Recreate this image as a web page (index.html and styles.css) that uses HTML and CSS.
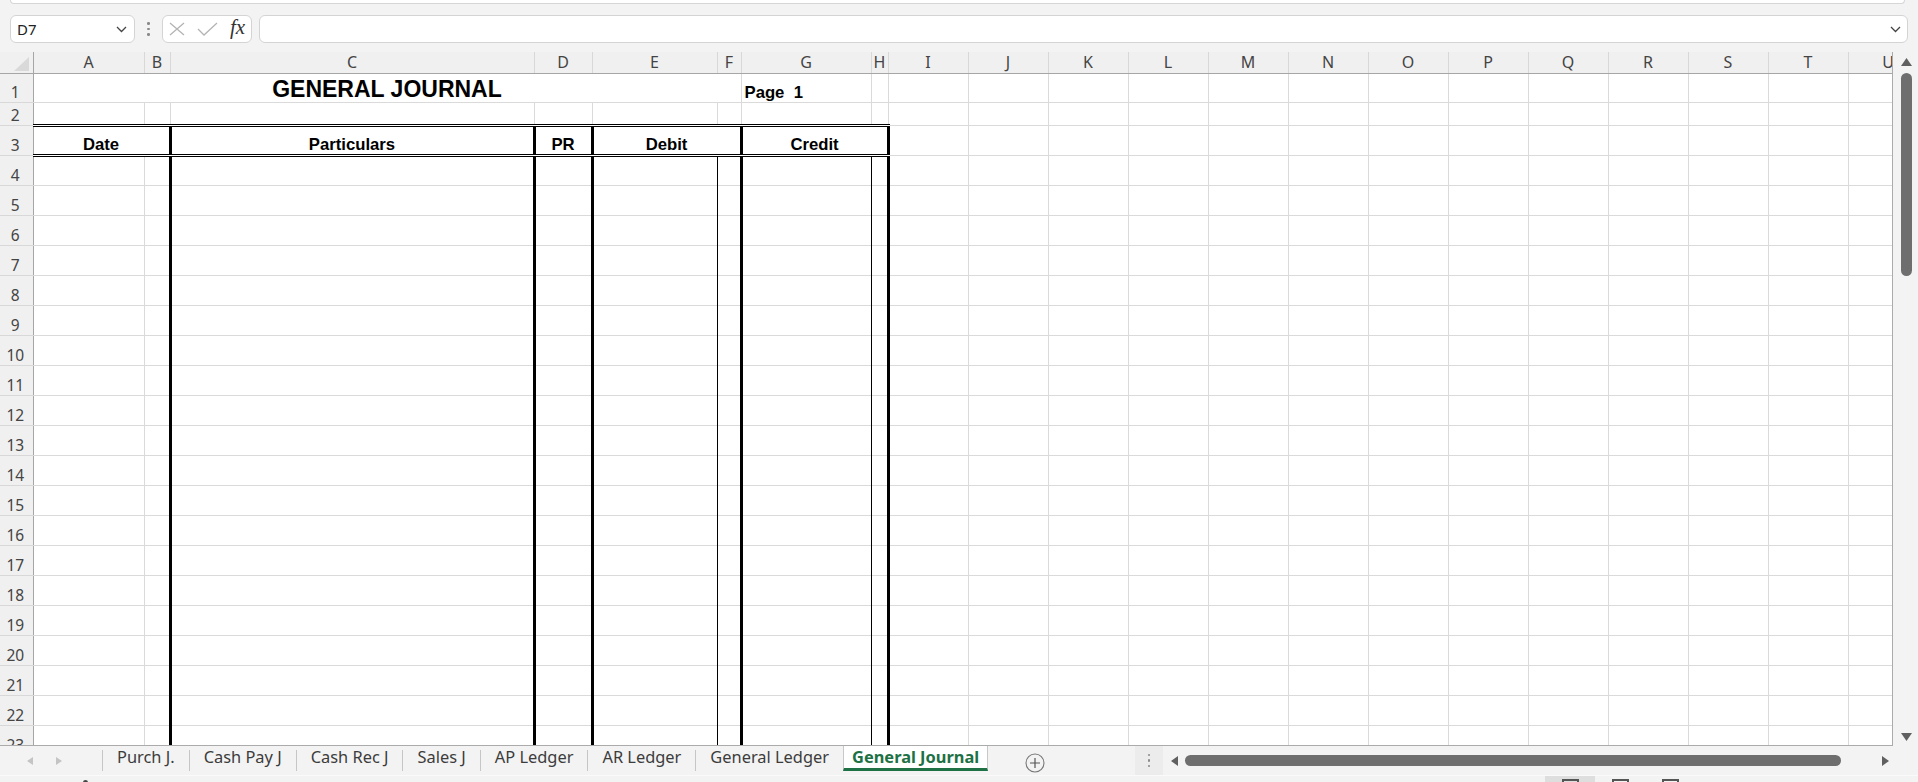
FILE: index.html
```html
<!DOCTYPE html>
<html lang="en">
<head>
    <meta charset="UTF-8">
    <meta name="viewport" content="width=device-width, initial-scale=1.0">
    <title>General Journal - Excel</title>
    <link rel="stylesheet" href="styles.css">
</head>
<body>
    <div class="ribbon-edge"></div>

    <div class="formula-bar">
        <div class="name-box">
            <span>D7</span>
            <svg width="11" height="7" viewBox="0 0 11 7"><polyline points="1,1 5.5,5.5 10,1" fill="none" stroke="#444" stroke-width="1.3"/></svg>
        </div>
        <div class="grip"><i></i><i></i><i></i></div>
        <div class="fx-box">
            <svg width="16" height="14" viewBox="0 0 16 14"><path d="M1 1 L15 13 M15 1 L1 13" stroke="#b4b4b4" stroke-width="1.3" fill="none"/></svg>
            <svg width="21" height="14" viewBox="0 0 21 14"><polyline points="1,7 7,13 20,1" fill="none" stroke="#b4b4b4" stroke-width="1.3"/></svg>
            <span class="fx">fx</span>
        </div>
        <div class="formula-input">
            <svg width="11" height="7" viewBox="0 0 11 7"><polyline points="1,1 5.5,5.5 10,1" fill="none" stroke="#444" stroke-width="1.3"/></svg>
        </div>
    </div>

    <div class="sheet-area">
        <div class="grid-wrap">
            <table class="sheet">
                <colgroup>
                    <col class="w-hd"><col class="w-a"><col class="w-b"><col class="w-c"><col class="w-d"><col class="w-e"><col class="w-f"><col class="w-g"><col class="w-h">
                    <col class="w-std"><col class="w-std"><col class="w-std"><col class="w-std"><col class="w-std"><col class="w-std"><col class="w-std"><col class="w-std"><col class="w-std"><col class="w-std"><col class="w-std"><col class="w-std"><col class="w-std">
                </colgroup>
                <thead>
                    <tr class="col-head">
                        <th class="corner"><svg width="15" height="14" viewBox="0 0 15 14"><polygon points="0,14 15,14 15,0" fill="#d9d9d9"/></svg></th>
                        <th>A</th><th>B</th><th>C</th><th>D</th><th>E</th><th>F</th><th>G</th><th>H</th>
                        <th>I</th><th>J</th><th>K</th><th>L</th><th>M</th><th>N</th><th>O</th><th>P</th><th>Q</th><th>R</th><th>S</th><th>T</th><th>U</th>
                    </tr>
                </thead>
                <tbody>
                    <tr class="r1">
                        <th>1</th>
                        <td colspan="6" class="title">GENERAL JOURNAL</td><td class="page">Page&nbsp;&nbsp;1</td><td></td>
                        <td></td><td></td><td></td><td></td><td></td><td></td><td></td><td></td><td></td><td></td><td></td><td></td><td></td>
                    </tr>
                    <tr class="r2">
                        <th>2</th>
                        <td></td><td></td><td></td><td></td><td></td><td></td><td></td><td></td>
                        <td></td><td></td><td></td><td></td><td></td><td></td><td></td><td></td><td></td><td></td><td></td><td></td><td></td>
                    </tr>
                    <tr class="r3">
                        <th>3</th>
                        <td colspan="2" class="jh">Date</td><td class="jh jl">Particulars</td><td class="jh jl">PR</td><td colspan="2" class="jh jl">Debit</td><td colspan="2" class="jh jl jr">Credit</td>
                        <td></td><td></td><td></td><td></td><td></td><td></td><td></td><td></td><td></td><td></td><td></td><td></td><td></td>
                    </tr>
                    <tr class="line"><th>4</th><td></td><td></td><td></td><td></td><td></td><td></td><td></td><td></td><td></td><td></td><td></td><td></td><td></td><td></td><td></td><td></td><td></td><td></td><td></td><td></td><td></td></tr>
                    <tr class="line"><th>5</th><td></td><td></td><td></td><td></td><td></td><td></td><td></td><td></td><td></td><td></td><td></td><td></td><td></td><td></td><td></td><td></td><td></td><td></td><td></td><td></td><td></td></tr>
                    <tr class="line"><th>6</th><td></td><td></td><td></td><td></td><td></td><td></td><td></td><td></td><td></td><td></td><td></td><td></td><td></td><td></td><td></td><td></td><td></td><td></td><td></td><td></td><td></td></tr>
                    <tr class="line"><th>7</th><td></td><td></td><td></td><td></td><td></td><td></td><td></td><td></td><td></td><td></td><td></td><td></td><td></td><td></td><td></td><td></td><td></td><td></td><td></td><td></td><td></td></tr>
                    <tr class="line"><th>8</th><td></td><td></td><td></td><td></td><td></td><td></td><td></td><td></td><td></td><td></td><td></td><td></td><td></td><td></td><td></td><td></td><td></td><td></td><td></td><td></td><td></td></tr>
                    <tr class="line"><th>9</th><td></td><td></td><td></td><td></td><td></td><td></td><td></td><td></td><td></td><td></td><td></td><td></td><td></td><td></td><td></td><td></td><td></td><td></td><td></td><td></td><td></td></tr>
                    <tr class="line"><th>10</th><td></td><td></td><td></td><td></td><td></td><td></td><td></td><td></td><td></td><td></td><td></td><td></td><td></td><td></td><td></td><td></td><td></td><td></td><td></td><td></td><td></td></tr>
                    <tr class="line"><th>11</th><td></td><td></td><td></td><td></td><td></td><td></td><td></td><td></td><td></td><td></td><td></td><td></td><td></td><td></td><td></td><td></td><td></td><td></td><td></td><td></td><td></td></tr>
                    <tr class="line"><th>12</th><td></td><td></td><td></td><td></td><td></td><td></td><td></td><td></td><td></td><td></td><td></td><td></td><td></td><td></td><td></td><td></td><td></td><td></td><td></td><td></td><td></td></tr>
                    <tr class="line"><th>13</th><td></td><td></td><td></td><td></td><td></td><td></td><td></td><td></td><td></td><td></td><td></td><td></td><td></td><td></td><td></td><td></td><td></td><td></td><td></td><td></td><td></td></tr>
                    <tr class="line"><th>14</th><td></td><td></td><td></td><td></td><td></td><td></td><td></td><td></td><td></td><td></td><td></td><td></td><td></td><td></td><td></td><td></td><td></td><td></td><td></td><td></td><td></td></tr>
                    <tr class="line"><th>15</th><td></td><td></td><td></td><td></td><td></td><td></td><td></td><td></td><td></td><td></td><td></td><td></td><td></td><td></td><td></td><td></td><td></td><td></td><td></td><td></td><td></td></tr>
                    <tr class="line"><th>16</th><td></td><td></td><td></td><td></td><td></td><td></td><td></td><td></td><td></td><td></td><td></td><td></td><td></td><td></td><td></td><td></td><td></td><td></td><td></td><td></td><td></td></tr>
                    <tr class="line"><th>17</th><td></td><td></td><td></td><td></td><td></td><td></td><td></td><td></td><td></td><td></td><td></td><td></td><td></td><td></td><td></td><td></td><td></td><td></td><td></td><td></td><td></td></tr>
                    <tr class="line"><th>18</th><td></td><td></td><td></td><td></td><td></td><td></td><td></td><td></td><td></td><td></td><td></td><td></td><td></td><td></td><td></td><td></td><td></td><td></td><td></td><td></td><td></td></tr>
                    <tr class="line"><th>19</th><td></td><td></td><td></td><td></td><td></td><td></td><td></td><td></td><td></td><td></td><td></td><td></td><td></td><td></td><td></td><td></td><td></td><td></td><td></td><td></td><td></td></tr>
                    <tr class="line"><th>20</th><td></td><td></td><td></td><td></td><td></td><td></td><td></td><td></td><td></td><td></td><td></td><td></td><td></td><td></td><td></td><td></td><td></td><td></td><td></td><td></td><td></td></tr>
                    <tr class="line"><th>21</th><td></td><td></td><td></td><td></td><td></td><td></td><td></td><td></td><td></td><td></td><td></td><td></td><td></td><td></td><td></td><td></td><td></td><td></td><td></td><td></td><td></td></tr>
                    <tr class="line"><th>22</th><td></td><td></td><td></td><td></td><td></td><td></td><td></td><td></td><td></td><td></td><td></td><td></td><td></td><td></td><td></td><td></td><td></td><td></td><td></td><td></td><td></td></tr>
                    <tr class="line"><th>23</th><td></td><td></td><td></td><td></td><td></td><td></td><td></td><td></td><td></td><td></td><td></td><td></td><td></td><td></td><td></td><td></td><td></td><td></td><td></td><td></td><td></td></tr>
                </tbody>
            </table>
        </div>
        <div class="vscroll">
            <svg width="11" height="8" viewBox="0 0 11 8"><polygon points="0,8 11,8 5.5,0" fill="#606060"/></svg>
            <div class="vthumb"></div>
            <svg class="down" width="11" height="8" viewBox="0 0 11 8"><polygon points="0,0 11,0 5.5,8" fill="#606060"/></svg>
        </div>
    </div>

    <div class="tab-bar">
        <div class="tab-nav">
            <svg width="6" height="8" viewBox="0 0 6 8"><polygon points="6,0 6,8 0,4" fill="#c4c4c4"/></svg>
            <svg width="6" height="8" viewBox="0 0 6 8"><polygon points="0,0 0,8 6,4" fill="#c4c4c4"/></svg>
        </div>
        <div class="tab">Purch J.</div>
        <div class="tab">Cash Pay J</div>
        <div class="tab">Cash Rec J</div>
        <div class="tab">Sales J</div>
        <div class="tab">AP Ledger</div>
        <div class="tab">AR Ledger</div>
        <div class="tab">General Ledger</div>
        <div class="tab active">General Journal</div>
        <div class="add-sheet">
            <svg width="20" height="20" viewBox="0 0 20 20"><circle cx="10" cy="10" r="9" fill="none" stroke="#777" stroke-width="1.1"/><path d="M10 5 V15 M5 10 H15" stroke="#555" stroke-width="1.2"/></svg>
        </div>
        <div class="hscroll">
            <div class="hgrip"><i></i><i></i><i></i></div>
            <svg width="7" height="10" viewBox="0 0 7 10"><polygon points="7,0 7,10 0,5" fill="#606060"/></svg>
            <div class="hthumb"></div>
            <svg class="right" width="7" height="10" viewBox="0 0 7 10"><polygon points="0,0 0,10 7,5" fill="#606060"/></svg>
        </div>
    </div>

    <div class="status-bar">
        <i class="status-dot"></i>
        <div class="views">
            <div class="view on"><i></i></div>
            <div class="view"><i></i></div>
            <div class="view"><i></i></div>
        </div>
    </div>
</body>
</html>
```

FILE: styles.css
```css
* {
    margin: 0;
    padding: 0;
    box-sizing: border-box;
}

body {
    width: 1918px;
    height: 782px;
    overflow: hidden;
    background: #f3f3f3;
    font-family: 'Noto Sans', sans-serif;
    color: #333;
}

/* ribbon / formula bar */

.ribbon-edge {
    height: 4px;
    margin: 0 13px 0 10px;
    background: #fff;
    border: 1px solid #d6d6d6;
    border-top: none;
    border-radius: 0 0 7px 7px;
}

.formula-bar {
    display: flex;
    align-items: center;
    height: 48px;
    padding: 11px 10px 9px 10px;
}

.name-box, .fx-box, .formula-input {
    height: 28px;
    background: #fff;
    border: 1px solid #d4d4d4;
    border-radius: 6px;
    display: flex;
    align-items: center;
}

.name-box {
    width: 125px;
    padding: 0 7px 0 6px;
    justify-content: space-between;
    font-size: 15px;
    color: #222;
}

.grip {
    width: 27px;
    display: flex;
    flex-direction: column;
    align-items: center;
    gap: 3px;
}

.grip i, .hgrip i {
    display: block;
    width: 2.5px;
    height: 2.5px;
    background: #8a8a8a;
    border-radius: 50%;
}

.fx-box {
    width: 90px;
    padding-left: 6px;
    gap: 12px;
}

.fx {
    font-family: 'Liberation Serif', serif;
    font-style: italic;
    font-size: 21px;
    color: #333;
    line-height: 1;
    padding-bottom: 3px;
}

.formula-input {
    flex: 1;
    margin-left: 7px;
    justify-content: flex-end;
    padding-right: 6px;
}

/* sheet */

.sheet-area {
    display: flex;
    height: 694px;
}

.grid-wrap {
    width: 1893px;
    height: 694px;
    overflow: hidden;
    border-right: 1px solid #ababab;
    border-bottom: 1px solid #ababab;
}

.sheet {
    width: 1928px;
    table-layout: fixed;
    border-collapse: collapse;
    background: #fff;
}

.w-hd { width: 33px; }
.w-a { width: 111px; }
.w-b { width: 26px; }
.w-c { width: 364px; }
.w-d { width: 58px; }
.w-e { width: 125px; }
.w-f { width: 24px; }
.w-g { width: 130px; }
.w-h { width: 17px; }
.w-std { width: 80px; }

.sheet tr { height: 30px; }
.sheet .col-head { height: 21px; }
.sheet .r1 { height: 29px; }
.sheet .r2 { height: 23px; }

.sheet th {
    background: #f0f0f0;
    font-weight: normal;
    font-size: 15.5px;
    color: #444;
    overflow: hidden;
}

.col-head th {
    border-right: 1px solid #d8d8d8;
    border-bottom: 1px solid #a6a6a6;
    font-size: 16px;
    vertical-align: middle;
    line-height: 19px;
}

.col-head .corner {
    border-right: 1px solid #a6a6a6;
    text-align: right;
    vertical-align: bottom;
    padding: 0 4px 2px 0;
    line-height: 0;
}

tbody th {
    border-right: 1px solid #a6a6a6;
    border-bottom: 1px solid #d8d8d8;
    vertical-align: bottom;
    text-align: center;
    padding-right: 2px;
    line-height: 20px;
}

.sheet td {
    border-right: 1px solid #dadada;
    border-bottom: 1px solid #dadada;
    font-family: 'Liberation Sans', Arial, sans-serif;
    font-weight: bold;
    color: #000;
    vertical-align: bottom;
    white-space: nowrap;
    overflow: hidden;
}

.title {
    font-size: 23px;
    text-align: center;
    line-height: 26px;
}

.page {
    font-size: 16.7px;
    padding-left: 3px;
    line-height: 19px;
}

/* journal header row */

.sheet td.jh {
    border-top: 3px double #000;
    border-bottom: 3px double #000;
    font-size: 16.7px;
    text-align: center;
    line-height: 19px;
}

.sheet td.jl { border-left: 3px solid #000; }
.sheet td.jr { border-right: 3px solid #000; }

/* journal ruling lines: 1px "double" paints as solid but outranks the gridlines */

.line td:nth-child(4),
.line td:nth-child(5),
.line td:nth-child(6),
.line td:nth-child(8) {
    border-left: 3px solid #000;
}

.line td:nth-child(6),
.line td:nth-child(8) {
    border-right: 1px double #000;
}

.line td:nth-child(7),
.line td:nth-child(9) {
    border-left: 1px double #000;
}

.line td:nth-child(9) {
    border-right: 3px solid #000;
}

/* vertical scrollbar */

.vscroll {
    width: 25px;
    display: flex;
    flex-direction: column;
    align-items: center;
    padding: 6px 0 5px 1px;
}

.vthumb {
    width: 11px;
    height: 203px;
    margin-top: 7px;
    background: #6e6e6e;
    border-radius: 6px;
}

.vscroll .down {
    margin-top: auto;
}

/* sheet tabs */

.tab-bar {
    display: flex;
    align-items: flex-start;
    height: 29px;
    font-size: 16.4px;
    color: #3c3c3c;
}

.tab-nav {
    width: 102px;
    display: flex;
    gap: 23px;
    padding: 11px 0 0 27px;
}

.tab {
    height: 21px;
    margin-top: 4px;
    padding: 0 14px;
    border-left: 1px solid #c6c6c6;
    line-height: 14px;
    white-space: nowrap;
}

.tab.active {
    height: 25px;
    margin-top: 0;
    padding: 4px 8px 0 8px;
    background: #fff;
    border-left: 1px solid #c8c8c8;
    border-right: 1px solid #c8c8c8;
    border-bottom: 3px solid #1e7145;
    color: #1e7145;
    font-weight: bold;
}

.add-sheet {
    margin: 7px 0 0 37px;
    line-height: 0;
}

.hscroll {
    margin-left: auto;
    width: 758px;
    height: 29px;
    display: flex;
    align-items: center;
    margin-right: 25px;
}

.hgrip {
    width: 28px;
    height: 29px;
    display: flex;
    flex-direction: column;
    align-items: center;
    justify-content: center;
    gap: 3px;
    background: #ececec;
    margin-right: 8px;
}

.hthumb {
    width: 656px;
    height: 11px;
    margin-left: 7px;
    background: #6e6e6e;
    border-radius: 6px;
}

.hscroll .right {
    margin-left: 41px;
}

/* status bar */

.status-bar {
    height: 7px;
    border-top: 1px solid #fafafa;
    display: flex;
    align-items: flex-start;
}

.status-dot {
    display: block;
    width: 5px;
    height: 3px;
    margin: 4px 0 0 83px;
    background: #444;
    border-radius: 3px 3px 0 0;
}

.views {
    display: flex;
    margin-left: auto;
    margin-right: 223px;
}

.view {
    width: 50px;
    height: 6px;
    display: flex;
    justify-content: center;
    padding-top: 3px;
}

.view.on {
    background: #dedede;
}

.view i {
    display: block;
    width: 17px;
    height: 4px;
    border: 2px solid #555;
    border-bottom: none;
}
```
